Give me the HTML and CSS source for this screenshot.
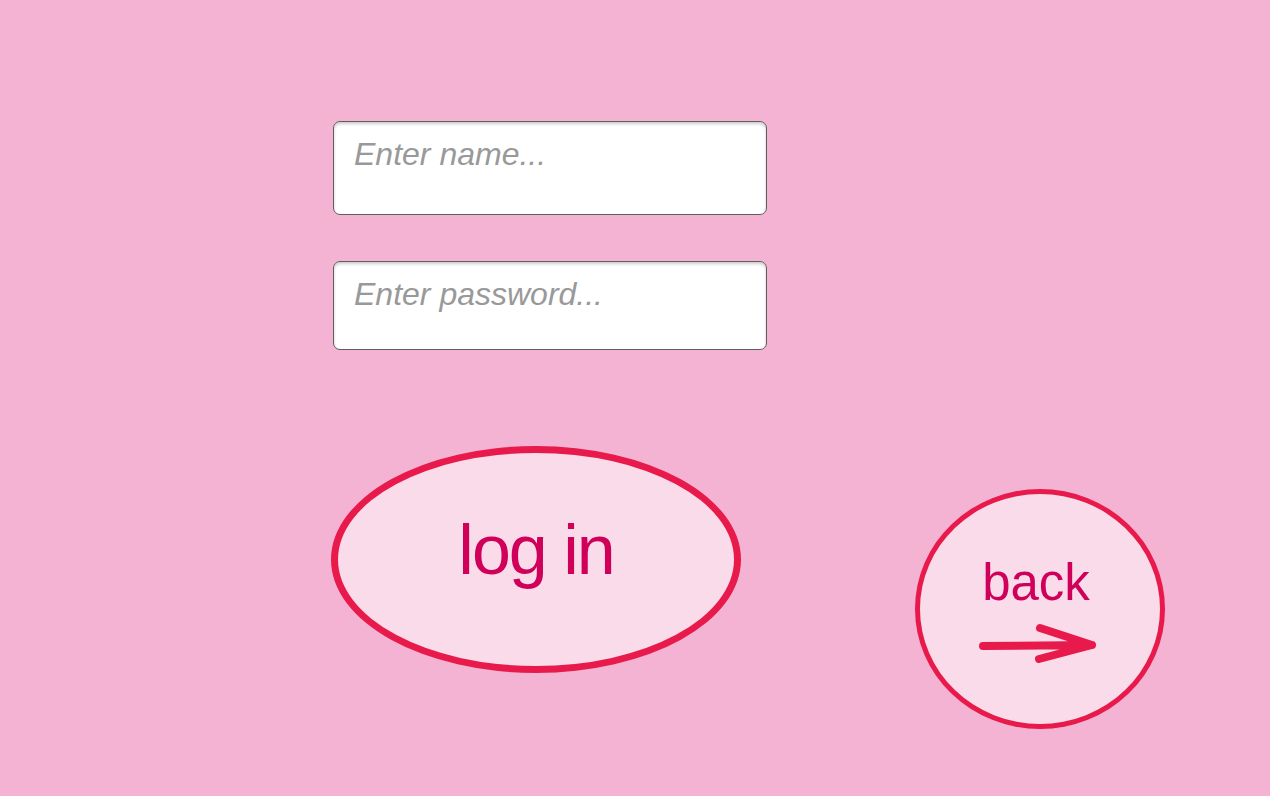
FILE: index.html
```html
<!DOCTYPE html>
<html>
<head>
<meta charset="utf-8">
<title>Log in</title>
<link rel="stylesheet" href="styles.css">
</head>
<body>
<div class="page">
  <div class="fields">
    <input class="field field-name" type="text" placeholder="Enter name...">
    <input class="field field-pass" type="password" placeholder="Enter password...">
  </div>
  <div class="actions">
    <button class="login">log in</button>
    <button class="back">
      <span class="back-label">back</span>
      <svg class="back-arrow" width="124" height="46" viewBox="0 0 124 46">
        <path d="M7 24 L116 23 M64 6 L116 23 L63 37" fill="none" stroke="#e81a4b" stroke-width="8" stroke-linecap="round" stroke-linejoin="round"/>
      </svg>
    </button>
  </div>
</div>
</body>
</html>
```
FILE: styles.css
```css
html, body {
  margin: 0;
  padding: 0;
}
body {
  background: #f4b3d3;
  width: 1270px;
  height: 796px;
  overflow: hidden;
  font-family: "Liberation Sans", Arial, sans-serif;
}
.page {
  padding-top: 121px;
}
.fields {
  margin-left: 333px;
  width: 434px;
  display: flex;
  flex-direction: column;
  gap: 46px;
}
.field {
  box-sizing: border-box;
  width: 434px;
  margin: 0;
  border: 1px solid #5e5e5e;
  border-radius: 7px;
  background: #ffffff;
  box-shadow: inset 0 2px 3px rgba(0, 0, 0, 0.2);
  font-family: "Liberation Sans", Arial, sans-serif;
  font-size: 32px;
  line-height: 36px;
  padding: 14px 20px 42px 20px;
  color: #333;
  outline: none;
}
.field-name {
  height: 94px;
}
.field-pass {
  height: 89px;
  padding-bottom: 37px;
}
.field::placeholder {
  color: #999999;
  font-style: italic;
  opacity: 1;
}
.actions {
  margin-left: 331px;
  margin-top: 96px;
  display: flex;
  align-items: flex-start;
}
.login {
  box-sizing: border-box;
  width: 410px;
  height: 227px;
  border: 7px solid #e81a4b;
  border-radius: 50%;
  background: #fadbe9;
  color: #d0005a;
  font-family: "Liberation Sans", Arial, sans-serif;
  font-size: 70px;
  letter-spacing: -2px;
  line-height: 1;
  padding: 0 0 20px 0;
  margin: 0;
  display: flex;
  align-items: center;
  justify-content: center;
  cursor: pointer;
}
.back {
  box-sizing: border-box;
  width: 250px;
  height: 240px;
  margin: 43px 0 0 174px;
  border: 5px solid #e81a4b;
  border-radius: 50%;
  background: #fadbe9;
  color: #d0005a;
  font-family: "Liberation Sans", Arial, sans-serif;
  padding: 63px 0 0 0;
  display: flex;
  flex-direction: column;
  align-items: center;
  cursor: pointer;
}
.back-label {
  font-size: 51px;
  line-height: 51px;
  display: block;
  margin-left: -8px;
}
.back-arrow {
  display: block;
  margin-top: 14px;
  margin-left: -4px;
}
```
